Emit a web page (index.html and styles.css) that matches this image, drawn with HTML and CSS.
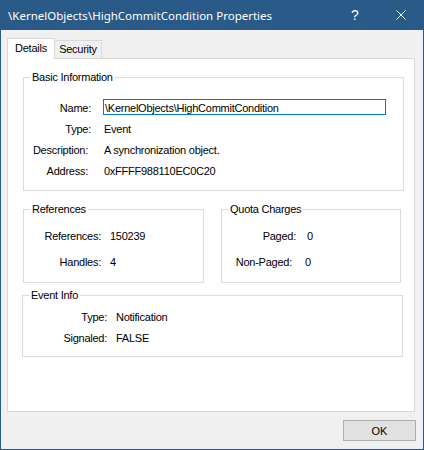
FILE: index.html
```html
<!DOCTYPE html>
<html lang="en">
<head>
  <meta charset="UTF-8">
  <title>\KernelObjects\HighCommitCondition Properties</title>
  <link rel="stylesheet" href="styles.css">
</head>
<body>
  <div class="window">
    <div class="titlebar">
      <span class="title">\KernelObjects\HighCommitCondition Properties</span>
      <span class="cap-btn help">?</span>
      <span class="cap-btn">
        <svg width="10" height="10" viewBox="0 0 10 10">
          <path d="M0.5 0.5 L9.5 9.5 M9.5 0.5 L0.5 9.5" stroke="#fff" stroke-width="1" fill="none"/>
        </svg>
      </span>
    </div>

    <div class="client">
      <div class="tabs">
        <div class="tab active">Details</div>
        <div class="tab">Security</div>
      </div>

      <div class="panel">
        <div class="group basic">
          <div class="caption">Basic Information</div>
          <div class="rows">
            <span class="lbl">Name:</span>
            <span><span class="field">\KernelObjects\HighCommitCondition</span></span>
            <span class="lbl">Type:</span>
            <span>Event</span>
            <span class="lbl in">Description:</span>
            <span>A synchronization object.</span>
            <span class="lbl in">Address:</span>
            <span>0xFFFF988110EC0C20</span>
          </div>
        </div>

        <div class="pair">
          <div class="group refs">
            <div class="caption">References</div>
            <div class="rows">
              <span class="lbl">References:</span>
              <span>150239</span>
              <span class="lbl">Handles:</span>
              <span>4</span>
            </div>
          </div>
          <div class="group quota">
            <div class="caption">Quota Charges</div>
            <div class="rows">
              <span class="lbl">Paged:</span>
              <span>0</span>
              <span class="lbl in4">Non-Paged:</span>
              <span class="back2">0</span>
            </div>
          </div>
        </div>

        <div class="group event">
          <div class="caption">Event Info</div>
          <div class="rows">
            <span class="lbl">Type:</span>
            <span>Notification</span>
            <span class="lbl">Signaled:</span>
            <span>FALSE</span>
          </div>
        </div>
      </div>

      <div class="footer">
        <button class="btn">OK</button>
      </div>
    </div>
  </div>
</body>
</html>
```

FILE: styles.css
```css
body {
  margin: 0;
  font-family: 'Liberation Sans', Arial, sans-serif;
  font-size: 11px;
  letter-spacing: -0.25px;
  color: #000;
}
.window {
  width: 424px;
  height: 450px;
  box-sizing: border-box;
  border: 1px solid #2a5a88;
  border-top: 0;
  background: #f0f0f0;
  display: flex;
  flex-direction: column;
}
.titlebar {
  height: 30px;
  margin: 0 -1px;
  background: #2a5a88;
  color: #fff;
  display: flex;
  align-items: center;
  letter-spacing: 0;
}
.title {
  flex: 1;
  padding-left: 8px;
  font-family: 'Noto Sans', sans-serif;
  font-size: 11.5px;
  white-space: nowrap;
}
.cap-btn {
  width: 46px;
  height: 30px;
  display: flex;
  align-items: center;
  justify-content: center;
}
.help {
  font-size: 14px;
}
.client {
  padding-top: 8px;
}
.tabs {
  display: flex;
  align-items: flex-end;
  margin: 0 0 -1px 6px;
  position: relative;
  z-index: 1;
}
.tab {
  border: 1px solid #d9d9d9;
  border-bottom: 0;
  background: #f0f0f0;
  text-align: center;
  line-height: 17px;
  width: 46px;
  border-left: 0;
  margin-bottom: 1px;
}
.tab.active {
  background: #fff;
  border-left: 1px solid #d9d9d9;
  width: 48px;
  box-sizing: border-box;
  line-height: 18px;
  padding-bottom: 2px;
  margin-bottom: 0;
}
.panel {
  width: 408px;
  height: 354px;
  box-sizing: border-box;
  margin-left: 6px;
  border: 1px solid #d9d9d9;
  background: #fff;
  overflow: hidden;
}
.group {
  position: relative;
  box-sizing: border-box;
  border: 1px solid #dcdcdc;
}
.caption {
  position: absolute;
  top: -7px;
  left: 6px;
  padding: 0 2px;
  background: #fff;
  line-height: 13px;
  white-space: nowrap;
}
.rows {
  display: grid;
  align-items: start;
  white-space: nowrap;
}
.lbl {
  text-align: right;
}
.lbl.in {
  padding-right: 3px;
}
.lbl.in4 {
  padding-right: 4px;
}
.back2 {
  margin-left: -2px;
}
.basic {
  width: 381px;
  height: 114px;
  margin: 18px 0 0 15px;
}
.basic .rows {
  grid-template-columns: 67px 1fr;
  column-gap: 13px;
  grid-auto-rows: 21px;
  line-height: 21px;
  padding-top: 20px;
}
.field {
  display: block;
  width: 283px;
  height: 16px;
  box-sizing: border-box;
  margin: 1px 0 0 -1px;
  border: 1px solid #0078d7;
  padding: 2px 0 0 1px;
  line-height: 12px;
}
.pair {
  display: flex;
  margin: 18px 0 0 15px;
}
.refs {
  width: 181px;
  height: 74px;
}
.quota {
  width: 180px;
  height: 74px;
  margin-left: 17px;
}
.refs .rows,
.quota .rows {
  grid-auto-rows: 26px;
  line-height: 26px;
  padding-top: 13px;
}
.refs .rows {
  grid-template-columns: 77px auto;
  column-gap: 9px;
}
.quota .rows {
  grid-template-columns: 74px auto;
  column-gap: 11px;
}
.event {
  width: 381px;
  height: 62px;
  margin: 12px 0 0 14px;
}
.event .rows {
  grid-template-columns: 84px auto;
  column-gap: 9px;
  grid-auto-rows: 21px;
  line-height: 21px;
  padding-top: 11px;
}
.footer {
  display: flex;
  justify-content: flex-end;
  padding: 8px 7px 0 0;
}
.btn {
  width: 73px;
  height: 21px;
  padding: 0;
  border: 1px solid #adadad;
  background: #e1e1e1;
  font: inherit;
  color: #000;
}
```
